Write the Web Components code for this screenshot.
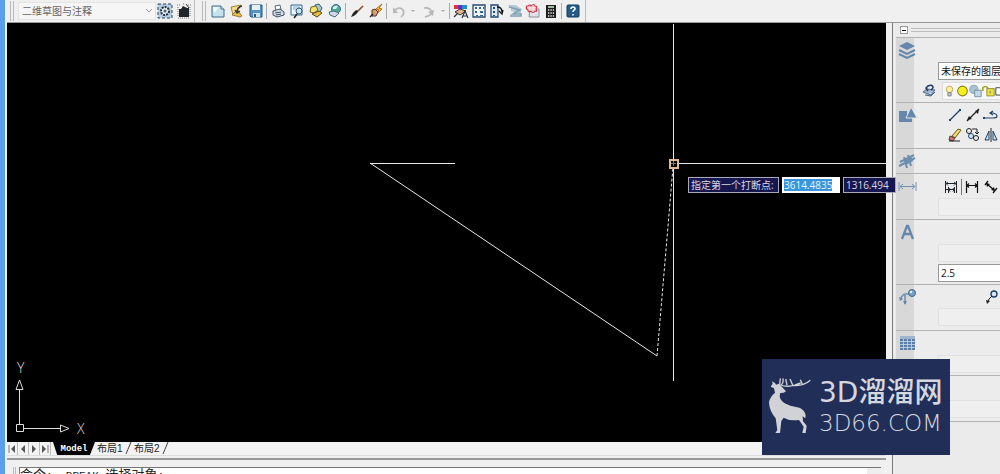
<!DOCTYPE html>
<html lang="zh-CN">
<head>
<meta charset="utf-8">
<meta name="viewport" content="width=device-width, initial-scale=1">
<title>二维草图与注释</title>
<style>
html, body { margin: 0; height: 100%; }
body { overflow: hidden; background: #f0f0f0; font: 10px/14px "Open Sans", "Noto Sans CJK SC", sans-serif; color: #222; }
</style>
</head>
<body>
<cad-app></cad-app>
<script>
const NAVY = '#1d4468';
const ICONS = {
  workspace: `<rect x="1" y="1" width="14" height="14" fill="#b9cde0" stroke="#28435e" stroke-dasharray="3 2"/><circle cx="8" cy="8" r="4" fill="#eee" stroke="#1c3044" stroke-width="2" stroke-dasharray="2 1"/><circle cx="8" cy="8" r="1.5" fill="#48637c"/>`,
  save_ws: `<path d="M3 6h2l2-3 4 2h2v9H3z" fill="#20262c"/><path d="M1 2h3M7 1h2M12 2h3M2 15h12M2 4v10M14 4v10" stroke="#777" stroke-dasharray="1 1"/><path d="M10 1l3 4" stroke="#333"/>`,
  fresh: `<path d="M2 3h9l3 3v8H2z" fill="#c6e2ef" stroke="#3d6c87"/><path d="M3 4h6l-5 6z" fill="#f5fbfd"/><path d="M11 3v3h3" fill="#fff" stroke="#3d6c87"/>`,
  open: `<path d="M2 4l10-2-3 5 3 6-8-1z" fill="#f0dc87" stroke="#8b6c22" stroke-width=".8"/><path d="M3 12l5-5 5 6-2 1z" fill="#e5bd4e" stroke="#8b6c22" stroke-width=".8"/><path d="M13 3q-5 1-5 6M6 7l2 3 3-2" fill="none" stroke="#333" stroke-width="1.3"/>`,
  save: `<path d="M2 2h12v12H3l-1-1z" fill="#5792c1" stroke="#23567f"/><path d="M4 2h8v5H4z" fill="#e4f0f7"/><path d="M5 10h7v4H5z" fill="#cfe0ed"/><path d="M6 11h2v3H6z" fill="#285880"/>`,
  print: `<path d="M5 3l5-1 1 5-5 1z" fill="#fff" stroke="#52677c"/><path d="M3 8l7-2 4 3v3l-7 2-4-2z" fill="#d7dee5" stroke="#3a5068"/><path d="M5 10l6-1M6 12l5-1" stroke="#3a5068"/>`,
  preview: `<path d="M2 2h11v10H2z" fill="#eaf5fc" stroke="#356b95"/><path d="M4 4h7M4 6h3" stroke="#7bb0d2"/><circle cx="10" cy="8" r="3" fill="#c5e3f2" stroke="#34556e"/><path d="M8 11l-3 4" stroke="#222" stroke-width="1.6"/>`,
  publish: `<path d="M7 2l4-1 3 4-2 4-4-1z" fill="#a9c7d7" stroke="#365a6c"/><path d="M3 4l5-1 2 4-4 3-4-1z" fill="#f5e36a" stroke="#6e6428"/><path d="M4 11l7-3 3 2-5 4z" fill="#ecbd43" stroke="#57451b"/>`,
  globe: `<circle cx="9" cy="6" r="4.500" fill="#51a896" stroke="#316f89"/><path d="M6 4q3-2 5-1l-2 3-3 0z" fill="#d7f0e8"/><path d="M2 9l5-1 5 2-4 4-5-2z" fill="#ccdce8" stroke="#4e687d"/>`,
  match: `<path d="M14 3L8 9" stroke="#854d32" stroke-width="1.6"/><path d="M9 8q-1 4-7 6 2-5 5-7z" fill="#222"/>`,
  block: `<path d="M14 1l-6 5 3 1-3 4 6-5-3-1z" fill="#f6c72b" stroke="#a96b17"/><path d="M4 7l3-1 3 3-2 4-4 0z" fill="#d29e78" stroke="#5d3522"/><path d="M2 14l3-3" stroke="#222" stroke-width="1.5"/>`,
  undo: `<path d="M11 14q4-3 2-7-3-4-8 0" fill="none" stroke="#b7b7b7" stroke-width="1.700"/><path d="M3 4v6h5z" fill="#b7b7b7"/>`,
  redo: `<path d="M5 14q7-2 7-5-2-5-8-4" fill="none" stroke="#b7b7b7" stroke-width="1.700"/><path d="M14 7l-1 6-5-4z" fill="#b7b7b7"/>`,
  props: `<path d="M1 2h4v4H1z" fill="#df3340"/><path d="M5 2h4v4H5z" fill="#6e2bc1"/><path d="M9 2h5v4H9z" fill="#1e8ed1"/><path d="M2 9l5-3 6 2-6 4z" fill="#e3b594" stroke="#44302a"/><path d="M1 14l4-4M9 15l3-7 3 7M10 13h4" fill="none" stroke="#2a3444" stroke-width="1.2"/>`,
  dc: `<path d="M2 2h12v12H2z" fill="#eef4fa" stroke="#274b70" stroke-width="1.3"/><path d="M4 4h2v2H4zM8 4h2v2H8zM12 4h1v2h-1zM4 8h2v2H4zM9 8h3v2H9zM5 12h2v1H5zM9 12h3v1H9z" fill="#37648d"/>`,
  palettes: `<path d="M2 2h7v12H2z" fill="#dcebf6" stroke="#24496d" stroke-width="1.300"/><path d="M4 4h2v2H4zM4 8h2v2H4zM4 12h2v1H4z" fill="#24496d"/><path d="M8 4q5 0 5 5M10 8l3 3 1-4" fill="none" stroke="#111" stroke-width="1.300"/>`,
  sheets: `<path d="M1 2h8l5 4H5zM4 5h10v6L4 8z" fill="#b4c9d4"/><path d="M2 4l11 3-7 4 8 0v2H3" fill="none" stroke="#7d9fb2" stroke-width="1.500"/>`,
  markup: `<path d="M5 6h9v8H4z" fill="#e1e2e7" stroke="#8c8f98"/><path d="M3 3q2-2 3 0 3-3 4 0 3 0 1 3 2 3-1 2-2 3-4 0-3 2-3-1-3-2-1-4z" fill="#f7d6d7" stroke="#c6384a" stroke-width="1.200"/>`,
  calc: `<path d="M3 2h10v13H3z" fill="#202020"/><path d="M5 3h6v2H5z" fill="#a6ba9a"/><path d="M5 7h6M5 10h6M5 13h6" stroke="#ddd" stroke-width="1.300" stroke-dasharray="1.4 1"/>`,
  help: `<rect x="2" y="2" width="12" height="12" rx="1" fill="#245c87" stroke="#123b5d"/><path d="M6 6q0-2 2-2 2 0 2 2 0 1-1 1-1 1-1 2M8 11v1.500" fill="none" stroke="#fff" stroke-width="1.600"/>`,
  layers: `<path d="M8 0l8 4-8 4-8-4z" fill="#6587ab"/><path d="M0 8l8 4 8-4M0 12l8 4 8-4" fill="none" stroke="#6587ab" stroke-width="2"/>`,
  shapes: `<path d="M0 4h8v11H0zM8 11h5v4H8z" fill="#6587ab"/><path d="M12 0l6 11H7z" fill="#6587ab" stroke="#e3e3e3"/>`,
  modify: `<path d="M0 13L16 5M1 9l14-7M5 4l3 11M9 2l3 11" fill="none" stroke="#6f8db0" stroke-width="2"/><path d="M5 7l7-4 2 5-7 4z" fill="#6f8db0"/>`,
  dim: `<path d="M0 4v9M17 4v9M1 8.500h15M4 6L1 8.500l3 2.500M13 6l3 2.500-3 2.500" fill="none" stroke="#7591b0"/>`,
  letter: `<path d="M3 15L8 2h1l5 13M5 10h7" fill="none" stroke="#6587ab" stroke-width="2.300"/>`,
  leader: `<path d="M2 11q0-7 8-6M6 6v9" fill="none" stroke="#6587ab" stroke-width="1.400"/><path d="M0 8l1 4 3-2zM4 12l2 4 2-4z" fill="#6587ab"/><circle cx="13" cy="4" r="3.500" fill="#7b9fc3" stroke="#44688f"/><circle cx="12" cy="3" r="1.200" fill="#e5eef7"/>`,
  table: `<path d="M1 2h15v13H1z" fill="#5b7fa6"/><path d="M1 1h15v3H1z" fill="#9eb5cd"/><path d="M1 6.500h15M1 9.500h15M1 12.500h15M4.500 4v11M8.500 4v11M12.500 4v11" stroke="#ccd9e6" stroke-width=".8"/>`,
  layerprev: `<path d="M1 10l4-3 8 1-4 5zM3 13l6 1 4-4" fill="#a7bad0" stroke="#47688e"/><path d="M6 9L4 6l2-2q4-2 5 1 0 2-2 3" fill="none" stroke="#243e63" stroke-width="1.600"/>`,
  bulb: `<circle cx="8" cy="6" r="4" fill="#fff2a0" stroke="#b59a4d"/><path d="M6 10h4v4H6z" fill="#c3cad4" stroke="#777"/>`,
  sun: `<circle cx="8" cy="8" r="6" fill="#f6ee20" stroke="#8d8423" stroke-width="1.300"/>`,
  vp: `<circle cx="6" cy="6" r="5" fill="#aac3d4" stroke="#7d98a9"/><path d="M7 7h8v8H7z" fill="#c4d7e4" stroke="#66889d"/>`,
  lock: `<path d="M1 8V4q3-3 6 0v4" fill="none" stroke="#a4a224" stroke-width="2"/><path d="M6 5h9v9H6z" fill="#ede33a" stroke="#85802d"/><path d="M10 8v3" stroke="#666"/>`,
  swatch: `<path d="M1 4h15v9H1z" fill="#fff" stroke="#222"/>`,
  line: `<path d="M3 13L13 3" stroke="${NAVY}" stroke-width="1.200"/><path d="M2 12h2v2H2zM12 2h2v2h-2z" fill="${NAVY}"/>`,
  ray: `<path d="M2 14L14 2" stroke="#222" stroke-width="1.300"/><path d="M4 9l3 3-5 1zM10 4l4-2-1 5z" fill="#222"/>`,
  pline: `<path d="M1 11h9q4 0 4-2t-4-3H8M10 4L7 6l3 2" fill="none" stroke="${NAVY}" stroke-width="1.200"/><path d="M0 10h2v2H0z" fill="${NAVY}"/>`,
  erase: `<path d="M5 9l6-7 3 1-6 8z" fill="#f1db60" stroke="#68561e"/><path d="M3 9l5 2-2 3-4-1z" fill="#c17c76" stroke="#593733"/><path d="M2 14h11" stroke="#222"/>`,
  copy: `<circle cx="4" cy="4" r="2.500" fill="none" stroke="#222"/><circle cx="6" cy="9" r="2.500" fill="#dce9f5" stroke="${NAVY}"/><circle cx="11" cy="11" r="2.500" fill="none" stroke="#222"/><path d="M7 2h5v5M10 5l2 2 2-2" fill="none" stroke="#222"/>`,
  mirror: `<path d="M6 4v9H2zM10 4v9h4z" fill="#d2e1ed" stroke="${NAVY}"/><path d="M8 1v14" stroke="#222"/>`,
  qdim: `<path d="M2.500 2v12M13.500 2v12M3 4.500h10M5.500 8v6M11.500 8v6M3 10.500h9" fill="none" stroke="#222"/><path d="M5 3L3 4.500l2 2M11 3l2 1.500-2 2M7 9l-1 1.500 1 2M10 9l1 1.500-1 2" fill="none" stroke="${NAVY}"/>`,
  linear: `<path d="M2.500 2v12M13.500 2v12M3 6.500h10M5 4.500L3 6.500l2 2M11 4.500l2 2-2 2" fill="none" stroke="#111" stroke-width="1.200"/>`,
  aligned: `<path d="M5 5l7 6M6 2L3 6M15 9l-4 5" stroke="#111" stroke-width="1.300"/><path d="M4 4l4 1-3 3zM13 12l-4-1 3-3z" fill="#111"/>`,
  mleader: `<circle cx="10" cy="5" r="3" fill="#dce9f5" stroke="${NAVY}" stroke-width="1.400"/><path d="M8 7l-3 3-1 3" fill="none" stroke="#222"/><path d="M2 11l4 1-3 3z" fill="#222"/>`
};

class CadIcon extends HTMLElement {
  connectedCallback() {
    this.attachShadow({mode: 'open'}).innerHTML = `<style>:host{display:block;width:16px;height:16px;flex:none}svg{display:block;width:100%;height:100%;overflow:visible}</style><svg viewBox="0 0 16 16" aria-hidden="true">${ICONS[this.getAttribute('name')]}</svg>`;
  }
}
customElements.define('cad-icon', CadIcon);

class CadTool extends HTMLElement {
  connectedCallback() {
    this.attachShadow({mode: 'open'}).innerHTML = `<style>:host{display:block;flex:none}button{display:block;border:0;padding:0;background:none}</style><button type="button" aria-label="${this.getAttribute('label')}"><cad-icon name="${this.getAttribute('icon')}"></cad-icon></button>`;
  }
}
customElements.define('cad-tool', CadTool);
const tool = (icon, label) => `<cad-tool icon="${icon}" label="${label}"></cad-tool>`;

class CadToolbar extends HTMLElement {
  connectedCallback() {
    this.attachShadow({mode: 'open'}).innerHTML = `<style>
:host{display:flex;height:22px;flex:none;background:#f0f0f0;border-bottom:1px solid #999}
.bar{display:flex;align-items:center;border-right:1px solid #bbb;flex:none}
.grip{width:2px;height:20px;border:solid #b8b8b8;border-width:0 1px;margin:0 4px 0 3px}
.work{width:188px;box-sizing:border-box}
.combo{position:relative;width:138px;height:18px;background:#f6f6f6;margin-right:1px}
select{appearance:none;width:100%;height:18px;border:1px solid #e3e3e3;background:none;color:#666;font:inherit;padding:0 3px}
.combo svg{position:absolute;right:3px;top:6px}
.group{display:flex;gap:3px}.tight{gap:2px}
i{width:1px;height:16px;background:#aaa;margin:0 3px 0 2px}
.std{padding-right:4px}
.std .grip{margin-left:7px}
.dd{border:0;padding:0;background:none;width:8px;height:16px}
.dd::after{content:"";display:block;border:2px solid transparent;border-top-color:#aaa;width:0;margin:2px auto 0}
</style>
<div class="bar work"><div class="grip"></div><div class="combo"><select aria-label="工作空间"><option>二维草图与注释</option></select><svg width="8" height="6"><path d="M1 1l3 3 3-3" fill="none" stroke="#999"/></svg></div><div class="group">${tool('workspace','工作空间设置')}${tool('save_ws','我的工作空间')}</div></div>
<div class="bar std"><div class="grip"></div>
<div class="group">${tool('fresh','新建')}${tool('open','打开')}${tool('save','保存')}</div><i></i>
<div class="group">${tool('print','打印')}${tool('preview','打印预览')}${tool('publish','发布')}${tool('globe','三维 DWF')}</div><i></i>
<div class="group">${tool('match','特性匹配')}${tool('block','块编辑器')}</div><i></i>
<div class="group">${tool('undo','放弃')}<button class="dd" aria-label="放弃列表"></button>${tool('redo','重做')}<button class="dd" aria-label="重做列表"></button></div><i></i>
<div class="group tight">${tool('props','特性')}${tool('dc','设计中心')}${tool('palettes','工具选项板')}${tool('sheets','图纸集')}${tool('markup','标记集')}${tool('calc','计算器')}</div><i></i>
<div class="group">${tool('help','帮助')}</div></div>`;
  }
}
customElements.define('cad-toolbar', CadToolbar);

class CadCanvas extends HTMLElement {
  connectedCallback() {
    this.attachShadow({mode: 'open'}).innerHTML = `<style>
:host{display:block;position:relative;background:#000;flex:1;min-height:0;z-index:1}
svg{display:block;position:absolute}
.draw{inset:0;width:100%;height:100%}
.ucs{left:8px;bottom:0;overflow:visible}
text{font:14px "Open Sans",sans-serif;font-weight:300;fill:#ddd}
.tip{position:absolute;left:681px;top:154px;display:flex;gap:3px;align-items:stretch;font-size:10px;line-height:14px;color:#d8d8e8}
label,.y{box-sizing:border-box;height:16px;background:#17174f;border:1px solid #a9a9bd;padding:0 2px;white-space:nowrap}
label{line-height:14px;width:91px}
input{box-sizing:border-box;font:inherit;height:16px;border-radius:0;outline:0;margin:0}
.x{width:58px;padding:0;border:solid #fff;border-width:2px 8px 2px 2px;background:#3995dc;color:#e4f4ff}
.y{width:53px;color:inherit}
</style>
<svg class="draw" fill="none" stroke="#e8e8e8" shape-rendering="crispEdges"><path d="M363 140.500H448M666.500 1V136M666.500 145V358M671 140.500H879"/><path d="M363 140L650 333" shape-rendering="auto"/><path d="M650 333L666 144" stroke-dasharray="3 2" shape-rendering="auto"/><rect x="662.500" y="136.500" width="8" height="8" stroke="#e0b898" stroke-width="2"/><path d="M664 140.500h5M666.500 138v5" stroke="#777"/></svg>
<svg class="ucs" width="84" height="88" fill="none" stroke="#ddd"><path d="M1.500 70.500h7v7h-7zM4.500 70V35M9 74.500H45M4.500 26L1 35.500h7zM54 74.500L45.500 71v7z"/><text x="2" y="19" stroke="none">Y</text><text x="62" y="80" stroke="none">X</text></svg>
<div class="tip"><label for="px">指定第一个打断点:</label><input id="px" class="x" value="3614.4835"><input class="y" aria-label="Y" value="1316.494"></div>`;
  }
}
customElements.define('cad-canvas', CadCanvas);

class CadTabs extends HTMLElement {
  connectedCallback() {
    this.attachShadow({mode: 'open'}).innerHTML = `<style>
:host{display:flex;height:13px;flex:none;background:#f3f3f3;border-bottom:1px solid #ddd}
button{border:0;padding:0;background:none;font:10px/12px "Liberation Sans","Noto Sans CJK SC",sans-serif;color:#222;height:13px;white-space:nowrap}
.nav{width:11px;border-right:1px solid #bbb}
.nav svg{display:block;margin:2px auto}
.on{width:42px;background:#000;color:#fff;font:bold 9px/12px "Liberation Mono",monospace;clip-path:polygon(0 0,100% 0,88% 100%,10% 100%);margin-left:2px}
.tab{width:37px;display:flex;align-items:center;justify-content:space-between;padding-left:2px}
</style>
<button class="nav" aria-label="第一个"><svg width="8" height="8"><path d="M1 0v8" stroke="#777"/><path d="M7 0v8L3 4z" fill="#555"/></svg></button>
<button class="nav" aria-label="上一个"><svg width="8" height="8"><path d="M6 0v8L2 4z" fill="#555"/></svg></button>
<button class="nav" aria-label="下一个"><svg width="8" height="8"><path d="M2 0v8l4-4z" fill="#555"/></svg></button>
<button class="nav" aria-label="最后一个"><svg width="8" height="8"><path d="M7 0v8" stroke="#777"/><path d="M1 0v8l4-4z" fill="#555"/></svg></button>
<button class="on">Model</button>
<button class="tab">布局1<svg width="7" height="13"><path d="M1 12L6 0" stroke="#444"/></svg></button>
<button class="tab">布局2<svg width="7" height="13"><path d="M1 12L6 0" stroke="#444"/></svg></button>`;
  }
}
customElements.define('cad-tabs', CadTabs);

class CadCommand extends HTMLElement {
  connectedCallback() {
    this.attachShadow({mode: 'open'}).innerHTML = `<style>
:host{display:block;flex:none;height:16px;overflow:hidden;margin-top:2px;border-top:2px solid #999;padding:7px 5px 0 6px;box-sizing:border-box;background:#f0f0f0}
.row{display:flex;border-left:3px double #bbb;padding-left:3px}
.log{flex:1;border:solid #777;border-width:1px 0 0 1px;background:#fff;font:13px/12px "Noto Sans CJK SC",sans-serif;height:20px;white-space:pre;color:#222}
.log span{font:11px/12px "Liberation Mono",monospace}
.scroll{width:14px;background:#eee;border-top:1px solid #777;height:20px}
</style><div class="row"><div class="log">命令<span>: _BREAK </span>选择对象<span>:</span></div><div class="scroll"></div></div>`;
  }
}
customElements.define('cad-command', CadCommand);

class CadSection extends HTMLElement {
  connectedCallback() {
    this.attachShadow({mode: 'open'}).innerHTML = `<style>
:host{display:flex;box-sizing:border-box;border-bottom:1px solid #b3b3b3;overflow:hidden;flex:none;background:#ececec}
.side{width:18px;background:#d8d8d8;flex:none;padding:4px 0 0 3px;box-sizing:border-box}
.body{flex:1;min-width:0}
</style><div class="side">${this.hasAttribute('icon') ? `<cad-icon name="${this.getAttribute('icon')}"></cad-icon>` : ''}</div><div class="body"><slot></slot></div>`;
  }
}
customElements.define('cad-section', CadSection);

class CadPanel extends HTMLElement {
  connectedCallback() {
    this.attachShadow({mode: 'open'}).innerHTML = `<style>
:host{display:flex;flex-direction:column;width:108px;flex:none;overflow:hidden;background:#ebebeb;border-left:1px solid #777;margin-left:6px;box-sizing:border-box;padding-left:3px}
.head{display:flex;align-items:center;gap:3px;height:14px;flex:none;border-bottom:1px solid #b3b3b3;padding-left:4px}
.head button{box-sizing:border-box;width:8px;height:8px;padding:0;border:1px solid #999;background:#fff;display:flex;align-items:center}
.head button::after{content:"";height:1px;flex:1;background:#111;margin:0 1px}
.head span{flex:1;height:2px;border:solid #bbb;border-width:1px 0}
.row{display:flex;padding:4px 0 0 33px;gap:2px}
.dims{padding:5px 0 3px 29px}
.dims span{border-left:1px solid #777}
.lead{padding:4px 0 3px 70px}
.f{display:block;box-sizing:border-box;width:100px;height:18px;margin:0 0 0 24px;border:1px solid #ddd;border-radius:0;background:#f1f1f1;font:inherit;appearance:none;padding:0 2px;color:#111}
.live{background:#fff;border-color:#999}
.low{margin-top:24px;margin-bottom:2px}
.s1{height:65px}.s2,.s4,.s6,.s8{height:46px}.s3{height:25px}.s5{height:65px}.s7{height:45px}
.lay{display:flex;padding-left:8px;gap:4px}
.props{display:flex;background:#f7f7f7;border:1px solid #ddd;border-right:0;flex:none}
.props cad-icon{width:13px;height:16px}
</style>
<div class="head"><button aria-label="折叠"></button><span></span></div>
<cad-section class="s1" icon="layers"><select class="f live low" aria-label="图层状态"><option>未保存的图层状态</option></select><div class="lay">${tool('layerprev','图层')}<div class="props"><cad-icon name="bulb"></cad-icon><cad-icon name="sun"></cad-icon><cad-icon name="vp"></cad-icon><cad-icon name="lock"></cad-icon><cad-icon name="swatch"></cad-icon></div></div></cad-section>
<cad-section class="s2" icon="shapes"><div class="row">${tool('line','直线')}${tool('ray','构造线')}${tool('pline','多段线')}</div><div class="row">${tool('erase','删除')}${tool('copy','复制')}${tool('mirror','镜像')}</div></cad-section>
<cad-section class="s3" icon="modify"></cad-section>
<cad-section class="s4" icon="dim"><div class="row dims">${tool('qdim','快速标注')}<span></span>${tool('linear','线性')}${tool('aligned','对齐')}</div><select class="f" disabled aria-label="标注样式"></select></cad-section>
<cad-section class="s5" icon="letter"><select class="f low" disabled aria-label="文字样式"></select><input class="f live" aria-label="文字高度" value="2.5"></cad-section>
<cad-section class="s6" icon="leader"><div class="row lead">${tool('mleader','多重引线')}</div><select class="f" disabled aria-label="引线样式"></select></cad-section>
<cad-section class="s7" icon="table"><select class="f low" disabled aria-label="表格样式"></select></cad-section>
<cad-section class="s8"><select class="f low" disabled aria-label="视图"></select></cad-section>`;
  }
}
customElements.define('cad-panel', CadPanel);

class CadBadge extends HTMLElement {
  connectedCallback() {
    this.attachShadow({mode: 'open'}).innerHTML = `<style>
:host{display:flex;position:absolute;right:50px;bottom:19px;z-index:3;width:188px;height:96px;box-sizing:border-box;padding:17px 0 0 4px;gap:5px;background:#212f58;color:#d5d7df}
svg{width:48px;height:60px;flex:none}
p{margin:0;white-space:nowrap}
.a{font:500 28px/34px "DejaVu Sans","Noto Sans CJK SC",sans-serif}
.b{font:200 23px/27px "DejaVu Sans",sans-serif}
</style><svg viewBox="48 75 144 180"><g fill="#d0d2d8"><path d="M62 107L68 98L66 91L75 96L78 101L88 98L96 108L108 121L101 125L91 126Q86 138 94 148Q103 159 121 164L148 170Q164 176 167 193L166 202L158 196L159 211L170 224L167 246L157 246L161 227L147 207Q119 211 101 200L94 210L90 246L76 246L82 237L77 202Q58 180 57 154Q60 137 75 125L72 112z"/></g><path d="M89 101L91 82M92 102Q101 98 99 82M93 102Q107 109 131 103Q160 106 181 88M111 102L107 84M128 102L120 84M135 102L152 96M157 100L151 86" fill="none" stroke="#d0d2d8" stroke-width="4"/></svg><div><p class="a">3D溜溜网</p><p class="b">3D66.COM</p></div>`;
  }
}
customElements.define('cad-badge', CadBadge);

class CadApp extends HTMLElement {
  connectedCallback() {
    this.attachShadow({mode: 'open'}).innerHTML = `<style>
:host{display:flex;flex-direction:column;position:relative;height:100vh;box-sizing:border-box;border-left:5px solid #5b9eea;padding-left:2px;overflow:hidden}
.main{display:flex;flex:1;min-height:0}
.left{display:flex;flex-direction:column;flex:1;min-width:0}
</style><cad-toolbar></cad-toolbar><div class="main"><div class="left"><cad-canvas></cad-canvas><cad-tabs></cad-tabs><cad-command></cad-command></div><cad-panel></cad-panel></div><cad-badge></cad-badge>`;
  }
}
customElements.define('cad-app', CadApp);
</script>
</body>
</html>
